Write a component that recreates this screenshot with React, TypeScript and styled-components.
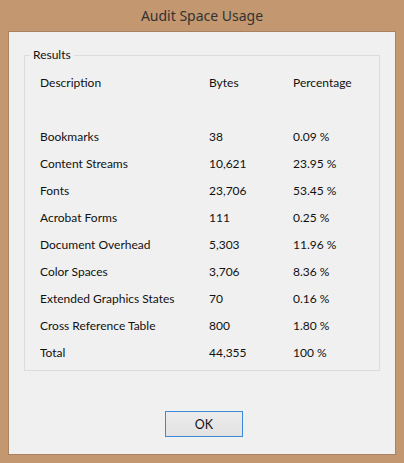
import React from 'react'
import styled, { createGlobalStyle } from 'styled-components'

const GlobalStyle = createGlobalStyle`
  html, body {
    margin: 0;
    padding: 0;
    background: #c3976f;
  }
  body {
    font-family: Lato, "Noto Sans", "Liberation Sans", sans-serif;
    font-size: 12px;
    color: #111;
  }
`

const rows = [
  { name: 'Bookmarks', bytes: '38', pct: '0.09 %' },
  { name: 'Content Streams', bytes: '10,621', pct: '23.95 %' },
  { name: 'Fonts', bytes: '23,706', pct: '53.45 %' },
  { name: 'Acrobat Forms', bytes: '111', pct: '0.25 %' },
  { name: 'Document Overhead', bytes: '5,303', pct: '11.96 %' },
  { name: 'Color Spaces', bytes: '3,706', pct: '8.36 %' },
  { name: 'Extended Graphics States', bytes: '70', pct: '0.16 %' },
  { name: 'Cross Reference Table', bytes: '800', pct: '1.80 %' },
  { name: 'Total', bytes: '44,355', pct: '100 %' },
]

const Window = styled.div`
  width: 404px;
  height: 463px;
  box-sizing: border-box;
  display: flex;
  flex-direction: column;
  padding: 0 8px 8px;
  background: #c3976f;
`

const TitleBar = styled.div`
  height: 31px;
  display: flex;
  align-items: center;
  justify-content: center;
  font-family: "Noto Sans", sans-serif;
  font-size: 14px;
  color: #333;
  padding-bottom: 1px;
  box-sizing: border-box;
`

const Client = styled.div`
  flex: 1;
  background: #f0f0f0;
  border: 1px solid #a9835f;
  display: flex;
  flex-direction: column;
  padding: 15px 15px 17px;
`

const GroupBox = styled.fieldset`
  margin: 0;
  padding: 0;
  border: 1px solid #dcdcdc;
  border-radius: 0;
`

const Legend = styled.legend`
  margin-left: 5px;
  padding: 0 3px;
  line-height: 16px;
`

const Grid = styled.div`
  display: grid;
  grid-template-columns: 169px 84px 1fr;
  grid-auto-rows: 27px;
  align-items: center;
  padding: 6px 0 4px 15px;
`

const Spacer = styled.div`
  grid-column: 1 / -1;
`

const Footer = styled.div`
  flex: 1;
  display: flex;
  align-items: flex-end;
  justify-content: center;
`

const Button = styled.button`
  width: 78px;
  height: 26px;
  margin-left: 4px;
  border: 1px solid #3c8bd6;
  background: linear-gradient(#ececec, #e2e2e2);
  font-family: inherit;
  font-size: 12.5px;
  color: #111;
  padding: 0;
`

const App: React.FC = () => {
  return (
    <Window>
      <GlobalStyle />
      <TitleBar>Audit Space Usage</TitleBar>
      <Client>
        <GroupBox>
          <Legend>Results</Legend>
          <Grid>
            <div>Description</div>
            <div>Bytes</div>
            <div>Percentage</div>
            <Spacer />
            {rows.map(r => (
              <React.Fragment key={r.name}>
                <div>{r.name}</div>
                <div>{r.bytes}</div>
                <div>{r.pct}</div>
              </React.Fragment>
            ))}
          </Grid>
        </GroupBox>
        <Footer>
          <Button>OK</Button>
        </Footer>
      </Client>
    </Window>
  )
}

export default App
